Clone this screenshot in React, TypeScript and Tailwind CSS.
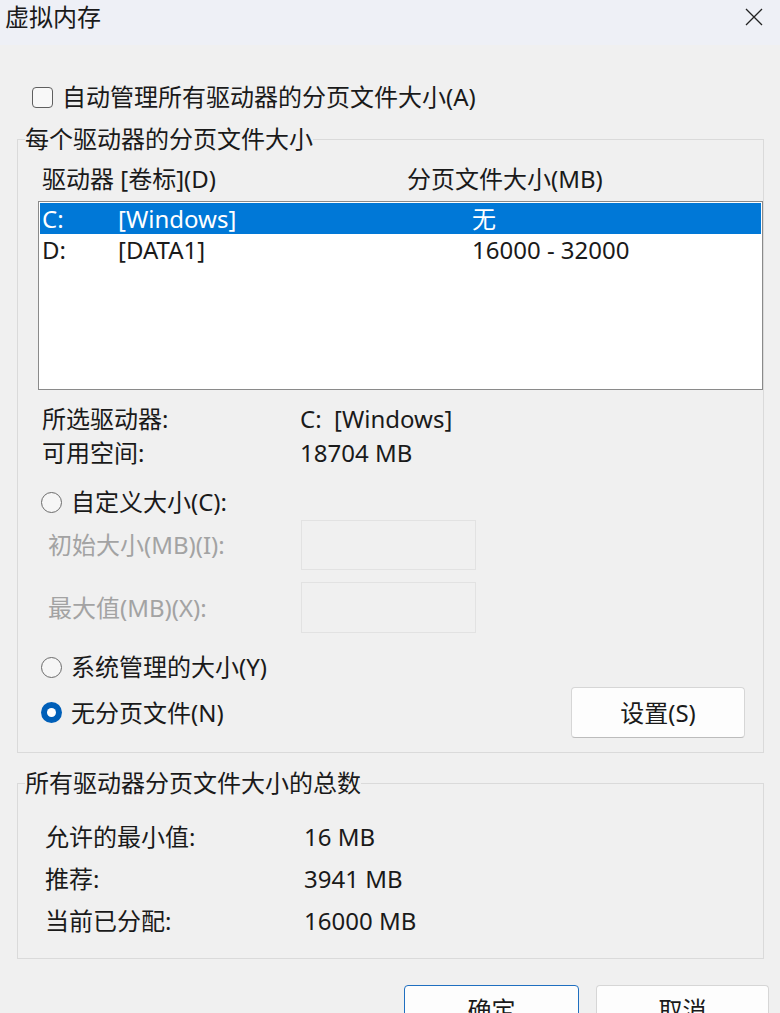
import React from 'react';

const FONT = { fontFamily: '"Noto Sans", "Noto Sans CJK SC", sans-serif' };

const Radio = ({ checked }: { checked?: boolean }) =>
  checked ? (
    <span className="flex h-[21px] w-[21px] shrink-0 items-center justify-center rounded-full bg-[#005fb8]">
      <span className="h-[9px] w-[9px] rounded-full bg-white" />
    </span>
  ) : (
    <span className="h-[21px] w-[21px] shrink-0 rounded-full border border-[#6b6b6b] bg-[#f6f6f6]" />
  );

const drives = [
  { letter: 'C:', label: '[Windows]', size: '无', selected: true },
  { letter: 'D:', label: '[DATA1]', size: '16000 - 32000', selected: false },
];

const totals = [
  { label: '允许的最小值:', value: '16 MB' },
  { label: '推荐:', value: '3941 MB' },
  { label: '当前已分配:', value: '16000 MB' },
];

export default function App() {
  return (
    <div className="h-[1013px] w-[780px] overflow-hidden bg-[#f0f0f0] text-[24px] text-[#1a1a1a]" style={FONT}>
      {/* title bar */}
      <div className="flex h-[45px] items-start justify-between bg-[#eef0f6] pl-[5px] pr-[16px]">
        <span className="leading-[34px]">虚拟内存</span>
        <svg width="20" height="20" viewBox="0 0 20 20" className="mt-[7px]" fill="none" stroke="#222" strokeWidth="1.3">
          <path d="M2 2 L18 18 M18 2 L2 18" />
        </svg>
      </div>

      {/* auto manage */}
      <div className="mt-[35px] flex h-[34px] items-center pl-[32px]">
        <span className="h-[21px] w-[21px] rounded-[4px] border border-[#5f5f5f] bg-[#f8f8f8]" />
        <span className="ml-[9px]">自动管理所有驱动器的分页文件大小(A)</span>
      </div>

      {/* per-drive group */}
      <fieldset className="ml-[17px] mt-[10px] w-[747px] min-w-0 border border-[#dadada] p-0 pb-[14px]">
        <legend className="ml-[7px] px-0 leading-[30px]">每个驱动器的分页文件大小</legend>

        <div className="mt-[10px] flex h-[30px] items-center pl-[24px]">
          <span className="w-[365px]">驱动器 [卷标](D)</span>
          <span>分页文件大小(MB)</span>
        </div>

        <div className="ml-[20px] mt-[7px] h-[189px] w-[725px] border border-[#8a8a8a] bg-white pt-[1px]">
          {drives.map((d) => (
            <div
              key={d.letter}
              className={`mx-[1px] flex h-[31px] items-center pl-[2px] ${d.selected ? 'bg-[#0078d7] text-white' : ''}`}
            >
              <span className="w-[76px]">{d.letter}</span>
              <span className="w-[354px]">{d.label}</span>
              <span>{d.size}</span>
            </div>
          ))}
        </div>

        <div className="mt-[12px] pl-[24px]">
          <div className="flex h-[34px] items-center">
            <span className="w-[258px]">所选驱动器:</span>
            <span>C:&nbsp;&nbsp;[Windows]</span>
          </div>
          <div className="flex h-[34px] items-center">
            <span className="w-[258px]">可用空间:</span>
            <span>18704 MB</span>
          </div>
        </div>

        <div className="mt-[15px] flex h-[34px] items-center pl-[23px]">
          <Radio />
          <span className="ml-[9px]">自定义大小(C):</span>
        </div>

        <div className="mt-[1px] flex h-[50px] items-center pl-[30px] text-[#a3a3a3]">
          <span className="w-[253px]">初始大小(MB)(I):</span>
          <span className="h-[50px] w-[175px] border border-[#e2e2e2]" />
        </div>
        <div className="mt-[12px] flex h-[51px] items-center pl-[30px] text-[#a3a3a3]">
          <span className="w-[253px]">最大值(MB)(X):</span>
          <span className="h-[51px] w-[175px] border border-[#e2e2e2]" />
        </div>

        <div className="mt-[17px] flex h-[34px] items-center pl-[23px]">
          <Radio />
          <span className="ml-[9px]">系统管理的大小(Y)</span>
        </div>

        <div className="mt-[3px] flex h-[51px] items-center pl-[23px] pr-[18px]">
          <Radio checked />
          <span className="ml-[9px]">无分页文件(N)</span>
          <button className="ml-auto h-[51px] w-[174px] rounded-[4px] border border-[#d6d6d6] border-b-[#bcbcbc] bg-[#fdfdfd]">
            设置(S)
          </button>
        </div>
      </fieldset>

      {/* totals group */}
      <fieldset className="ml-[17px] mt-[15px] w-[747px] min-w-0 border border-[#dadada] p-0 pb-[16px]">
        <legend className="ml-[7px] px-0 leading-[30px]">所有驱动器分页文件大小的总数</legend>
        <div className="mt-[18px] pl-[27px]">
          {totals.map((t) => (
            <div key={t.label} className="flex h-[42px] items-center">
              <span className="w-[259px]">{t.label}</span>
              <span>{t.value}</span>
            </div>
          ))}
        </div>
      </fieldset>

      {/* dialog buttons */}
      <div className="mt-[26px] flex justify-end gap-[17px] pr-[11px]">
        <button className="h-[50px] w-[175px] rounded-[4px] border border-[#1f6fc0] bg-[#fdfdfd]">确定</button>
        <button className="h-[50px] w-[173px] rounded-[4px] border border-[#d6d6d6] border-b-[#bcbcbc] bg-[#fdfdfd]">取消</button>
      </div>
    </div>
  );
}
